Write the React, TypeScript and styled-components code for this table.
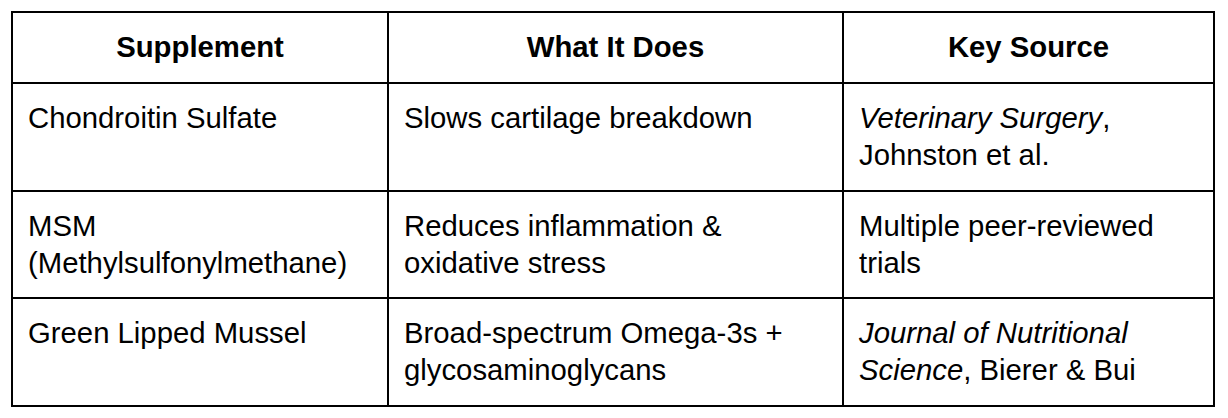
import React from "react";
import styled, { createGlobalStyle } from "styled-components";

const GlobalStyle = createGlobalStyle`
  html, body {
    margin: 0;
    padding: 0;
    background: #ffffff;
  }
  body {
    font-family: "Liberation Sans", Arial, sans-serif;
    color: #000000;
  }
`;

const Page = styled.div`
  padding: 11px 0 0 11px;
`;

const Table = styled.table`
  border-collapse: collapse;
  table-layout: fixed;
  width: 1202px;
  border: 2px solid #000;
  font-family: "Liberation Sans", Arial, sans-serif;
  font-size: 29.3px;
  line-height: 37px;
  color: #000;
`;

const Col = styled.col<{ $w: number }>`
  width: ${(p) => p.$w}px;
`;

const HeadCell = styled.th`
  border: 2px solid #000;
  padding: 15px 14px 17px 14px;
  font-weight: 700;
  text-align: center;
  vertical-align: top;
`;

const Cell = styled.td`
  border: 2px solid #000;
  padding: 15px 14px 16.5px 15px;
  text-align: left;
  vertical-align: top;
  font-weight: 400;
`;

const Row = styled.tr``;

const Em = styled.i`
  font-style: italic;
`;

type RowData = { sup: React.ReactNode; does: React.ReactNode; src: React.ReactNode };

const rows: RowData[] = [
  {
    sup: "Chondroitin Sulfate",
    does: "Slows cartilage breakdown",
    src: (
      <>
        <Em>Veterinary Surgery</Em>,<br />
        Johnston et al.
      </>
    ),
  },
  {
    sup: (
      <>
        MSM
        <br />
        (Methylsulfonylmethane)
      </>
    ),
    does: (
      <>
        Reduces inflammation &amp;
        <br />
        oxidative stress
      </>
    ),
    src: (
      <>
        Multiple peer-reviewed
        <br />
        trials
      </>
    ),
  },
  {
    sup: "Green Lipped Mussel",
    does: (
      <>
        Broad-spectrum Omega-3s +
        <br />
        glycosaminoglycans
      </>
    ),
    src: (
      <>
        <Em>Journal of Nutritional</Em>
        <br />
        <Em>Science</Em>, Bierer &amp; Bui
      </>
    ),
  },
];

export default function App() {
  return (
    <>
      <GlobalStyle />
      <Page>
        <Table>
          <colgroup>
            <Col $w={376} />
            <Col $w={455} />
            <Col $w={371} />
          </colgroup>
          <thead>
            <Row>
              <HeadCell>Supplement</HeadCell>
              <HeadCell>What It Does</HeadCell>
              <HeadCell>Key Source</HeadCell>
            </Row>
          </thead>
          <tbody>
            {rows.map((r, i) => (
              <Row key={i}>
                <Cell>{r.sup}</Cell>
                <Cell>{r.does}</Cell>
                <Cell>{r.src}</Cell>
              </Row>
            ))}
          </tbody>
        </Table>
      </Page>
    </>
  );
}
